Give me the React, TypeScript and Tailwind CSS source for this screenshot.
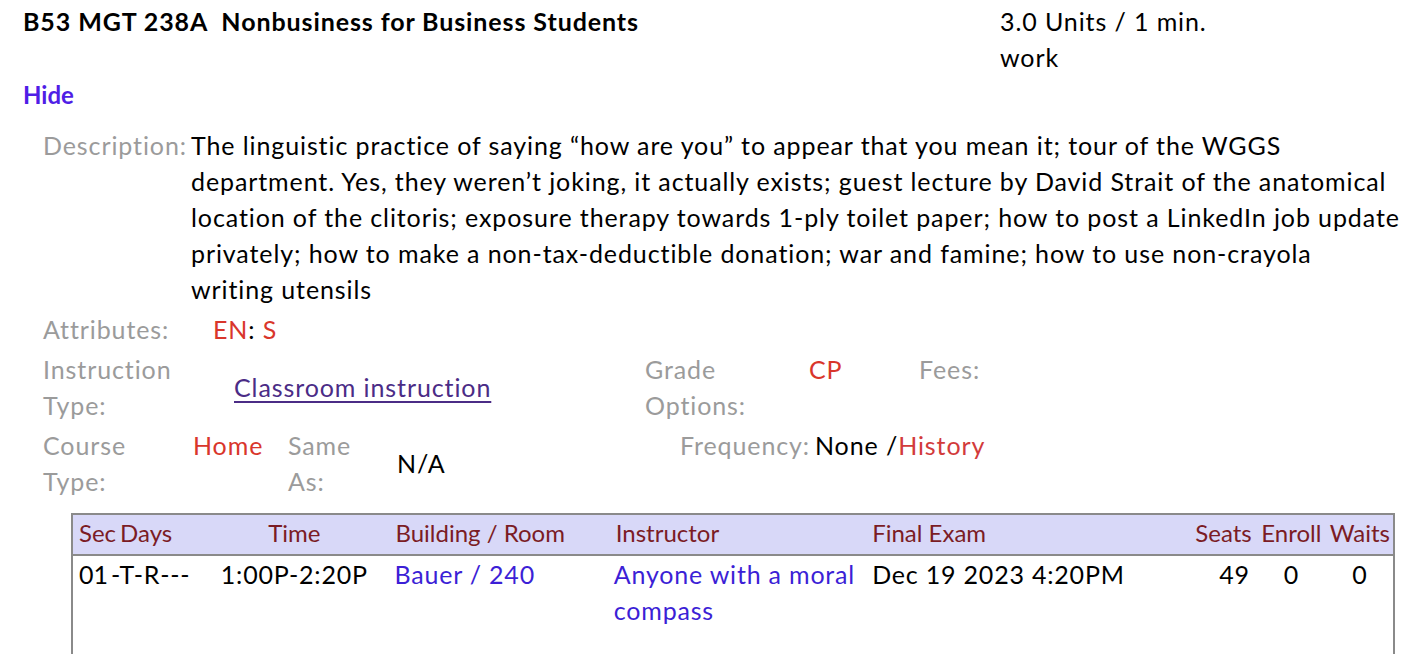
import React from "react";

const label = "text-[#9b9b9b]";
const red = "text-[#d9362b]";
const th = "font-normal pt-0 pb-[3px]";

const description = [
  "The linguistic practice of saying “how are you” to appear that you mean it; tour of the WGGS",
  "department. Yes, they weren’t joking, it actually exists; guest lecture by David Strait of the anatomical",
  "location of the clitoris; exposure therapy towards 1-ply toilet paper; how to post a LinkedIn job update",
  "privately; how to make a non-tax-deductible donation; war and famine; how to use non-crayola",
  "writing utensils",
];

export default function App() {
  return (
    <div className="min-h-screen bg-white text-black font-['Lato',sans-serif] text-[25px] tracking-[0.9px] leading-[36px]">
      {/* course heading */}
      <div className="flex pl-[23px] pt-[3px]">
        <div className="w-[977px] font-bold whitespace-pre">B53 MGT 238A  Nonbusiness for Business Students</div>
        <div className="w-[225px]">3.0 Units / 1 min. work</div>
      </div>
      <div className="pl-[23px] pt-[2px] font-bold text-[24px] tracking-normal text-[#4f1ee6]">Hide</div>

      {/* details */}
      <div className="pl-[43px] pt-[14px]">
        <div className="flex">
          <div className={`w-[148px] shrink-0 ${label}`}>Description:</div>
          <div className="flex-1 whitespace-nowrap">
            {description.map((line) => (
              <div key={line}>{line}</div>
            ))}
          </div>
        </div>

        <div className="flex mt-[4px]">
          <div className={`w-[170px] shrink-0 ${label}`}>Attributes:</div>
          <div>
            <span className={red}>EN</span>: <span className={red}>S</span>
          </div>
        </div>

        <div className="flex items-center mt-[4px]">
          <div className={`w-[191px] shrink-0 ${label}`}>
            Instruction
            <br />
            Type:
          </div>
          <div className="w-[411px] shrink-0">
            <a href="#" className="text-[#4b2c86] underline underline-offset-[4px]">
              Classroom instruction
            </a>
          </div>
          <div className={`w-[164px] shrink-0 self-start ${label}`}>
            Grade
            <br />
            Options:
          </div>
          <div className={`w-[110px] shrink-0 self-start ${red}`}>CP</div>
          <div className={`self-start ${label}`}>Fees:</div>
        </div>

        <div className="flex items-center mt-[4px]">
          <div className={`w-[150px] shrink-0 ${label}`}>
            Course
            <br />
            Type:
          </div>
          <div className={`w-[95px] shrink-0 self-start ${red}`}>Home</div>
          <div className={`w-[109px] shrink-0 ${label}`}>
            Same
            <br />
            As:
          </div>
          <div className="w-[283px] shrink-0">N/A</div>
          <div className="self-start flex">
            <span className={label}>Frequency:</span>
            <span className="ml-[5px]">None /</span>
            <span className="text-[#d23b3b]">History</span>
          </div>
        </div>
      </div>

      {/* sections table */}
      <div className="pl-[71px] pr-[10px] mt-[14px]">
        <table className="w-full table-fixed border-collapse border-2 border-[#8a8a8a]">
          <colgroup>
            <col className="w-[38px]" />
            <col className="w-[89px]" />
            <col className="w-[190px]" />
            <col className="w-[220px]" />
            <col className="w-[256px]" />
            <col className="w-[322px]" />
            <col className="w-[67px]" />
            <col className="w-[71px]" />
            <col className="w-[67px]" />
          </colgroup>
          <thead>
            <tr className="bg-[#d8d8f8] text-[#7b1c25] text-[24px] tracking-normal border-b-2 border-[#8a8a8a]">
              <th className={`${th} text-left pl-[6px]`}>Sec</th>
              <th className={`${th} text-left pl-[10px]`}>Days</th>
              <th className={`${th} text-center`}>Time</th>
              <th className={`${th} text-left pl-[6px]`}>Building / Room</th>
              <th className={`${th} text-left pl-[6px]`}>Instructor</th>
              <th className={`${th} text-left pl-[6px]`}>Final Exam</th>
              <th className={`${th} text-right pr-[4px]`}>Seats</th>
              <th className={`${th} text-center`}>Enroll</th>
              <th className={`${th} text-center`}>Waits</th>
            </tr>
          </thead>
          <tbody>
            <tr className="align-top h-[100px] tracking-[0.8px]">
              <td className="pl-[6px] tracking-normal">01</td>
              <td className="pl-[1px]">-T-R---</td>
              <td className="text-center">1:00P-2:20P</td>
              <td className="pl-[5px] text-[#3c1fd6]">Bauer / 240</td>
              <td className="pl-[4px] pr-[2px] text-[#3c1fd6]">Anyone with a moral compass</td>
              <td className="pl-[6px]">Dec 19 2023 4:20PM</td>
              <td className="text-right pr-[6px]">49</td>
              <td className="text-center">0</td>
              <td className="text-center">0</td>
            </tr>
          </tbody>
        </table>
      </div>
    </div>
  );
}
